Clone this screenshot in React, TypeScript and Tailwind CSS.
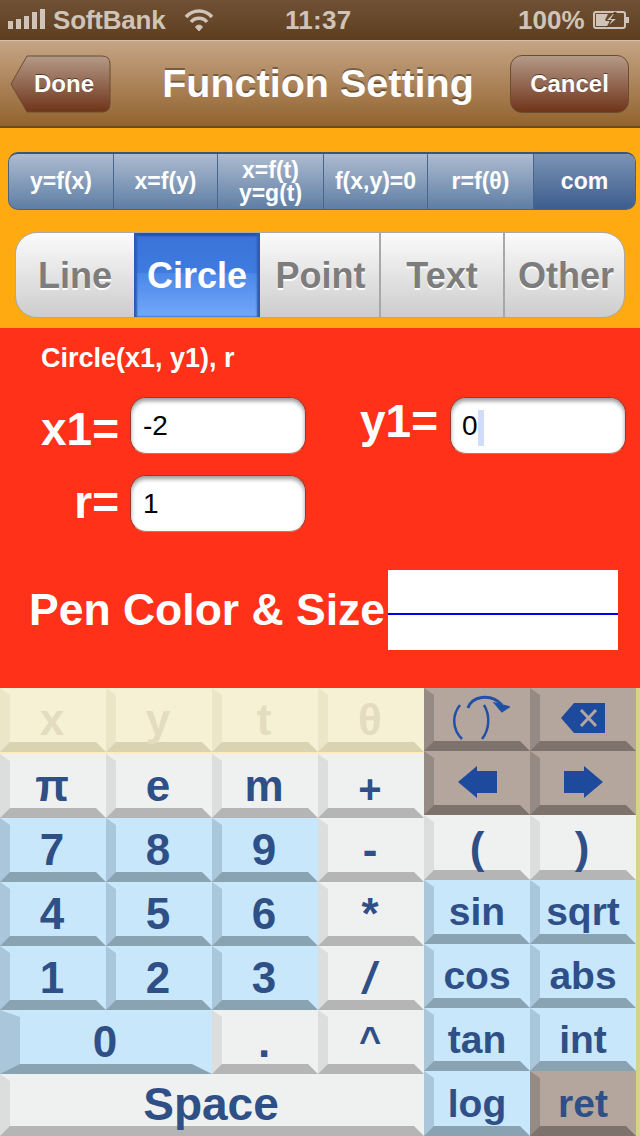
import type { ReactNode } from "react";

const faces = {
  yellow: "bg-[#f6f1d5] border-t-[#f6f1d5] border-r-[#f6f1d5] border-l-[#ece6c8] border-b-[#d9d3b2] text-[#e3dcc0]",
  white: "bg-[#eff1f1] border-t-[#eff1f1] border-r-[#eff1f1] border-l-[#dcdddd] border-b-[#b4b5b4] text-[#2f4f87]",
  blue: "bg-[#c8e7fb] border-t-[#c8e7fb] border-r-[#c8e7fb] border-l-[#a9c6da] border-b-[#8aa3b3] text-[#2f4f87]",
  brown: "bg-[#b5a69d] border-t-[#b5a69d] border-r-[#b5a69d] border-l-[#968a84] border-b-[#7e726c] text-[#2f4f87]",
};

type Face = keyof typeof faces;

function Key({
  face,
  children,
  className = "w-[106px] border-l-[10px] border-r-[10px]",
  big = true,
}: {
  face: Face;
  children?: ReactNode;
  className?: string;
  big?: boolean;
}) {
  return (
    <div
      className={`h-full flex items-center justify-center border-t-[7px] border-b-[10px] font-bold ${
        big ? "text-[44px] pt-[3px] pr-[2px]" : "text-[39px] pt-[4px]"
      } ${faces[face]} ${className}`}
    >
      {children}
    </div>
  );
}

function RotateIcon() {
  return (
    <svg className="mt-[-4px]" width="66" height="48" viewBox="0 0 66 48" fill="none" stroke="#2150a4" strokeWidth="2.500">
      <path d="M16 11C8 21 8 35 18 45" />
      <path d="M40 11C46 21 46 35 38 45" />
      <path d="M24 14C27 3 46 -2 58 11" strokeWidth="3" />
      <path d="M52 10L64 13L58 17Z" fill="#2150a4" />
    </svg>
  );
}

function BackspaceIcon() {
  return (
    <svg className="mt-[-4px]" width="44" height="30" viewBox="0 0 44 30">
      <path d="M0 15L13 0H44V30H13Z" fill="#1e4a9e" />
      <path d="M20 7L35 23M35 7L20 23" stroke="#b5a69d" strokeWidth="3" />
    </svg>
  );
}

function ArrowIcon({ right = false }: { right?: boolean }) {
  return (
    <svg className="mt-[-4px]" width="39" height="32" viewBox="0 0 39 32">
      <path d={right ? "M0 5H20V0L39 16L20 32V27H0Z" : "M39 5H19V0L0 16L19 32V27H39Z"} fill="#1e4a9e" />
    </svg>
  );
}

function StatusBar() {
  return (
    <div className="h-[40px] flex items-center pl-[8px] bg-gradient-to-b from-[#715135] to-[#5d3e1f] text-[#cfc4b7] text-[26px] font-bold">
      <div className="w-[38px] h-[20px] flex items-end gap-[3px] mt-[-2px]">
        <span className="w-[5px] h-[8px] bg-[#cfc4b7]" />
        <span className="w-[5px] h-[10px] bg-[#cfc4b7]" />
        <span className="w-[5px] h-[13px] bg-[#cfc4b7]" />
        <span className="w-[5px] h-[17px] bg-[#cfc4b7]" />
        <span className="w-[5px] h-[20px] bg-[#cfc4b7]" />
      </div>
      <span className="ml-[7px] w-[112px] tracking-[-0.2px]">SoftBank</span>
      <svg className="ml-[19px] w-[30px] h-[24px]" viewBox="0 0 30 24" fill="none" stroke="#cfc4b7" strokeWidth="3.500">
        <path d="M2 9C9 1 21 1 28 9" />
        <path d="M7 14C11 9 19 9 23 14" />
        <path d="M11.500 19L15 23L18.500 19C17 16.500 13 16.500 11.500 19Z" fill="#cfc4b7" strokeWidth="1" />
      </svg>
      <span className="ml-[71px] w-[66px] tracking-[0.3px]">11:37</span>
      <span className="ml-[167px] w-[65px]">100%</span>
      <svg className="ml-[10px] w-[37px] h-[18px]" viewBox="0 0 37 18" fill="none">
        <rect x="1" y="1" width="31" height="16" rx="2" stroke="#cfc4b7" strokeWidth="2" />
        <rect x="33" y="6" width="3" height="6" fill="#cfc4b7" />
        <path d="M3 3H15L12 9H17L15 15H3Z" fill="#cfc4b7" />
        <path d="M21 1L12 10H17L13 17L25 7H19L24 1Z" fill="#5d3e1f" />
        <path d="M20 3L14 9H19L16 14L23 8H17.500L21 3Z" fill="#cfc4b7" />
      </svg>
    </div>
  );
}

function NavBar() {
  return (
    <div className="h-[88px] flex items-center pl-[10px] bg-gradient-to-b from-[#c5a585] to-[#92632d] border-t border-t-[#d8c3a8] border-b-2 border-b-[#6c4a1c]">
      <div className="relative w-[101px] h-[58px] flex items-center justify-center pl-[7px] text-white text-[24px] font-bold [text-shadow:0_-1px_0_rgba(0,0,0,0.5)]">
        <svg className="absolute inset-0" width="101" height="58" viewBox="0 0 101 58">
          <defs>
            <linearGradient id="back" x1="0" y1="0" x2="0" y2="1">
              <stop offset="0" stopColor="#b49a88" />
              <stop offset="1" stopColor="#6f3419" />
            </linearGradient>
          </defs>
          <path d="M1 29L17 1H92Q100 1 100 9V49Q100 57 92 57H17Z" fill="url(#back)" stroke="#6b4c2e" />
        </svg>
        <span className="relative">Done</span>
      </div>
      <div className="flex-1 flex justify-center pl-[15px] text-white text-[39.500px] font-bold [text-shadow:0_-2px_0_rgba(0,0,0,0.35)]">
        Function Setting
      </div>
      <div className="w-[119px] h-[58px] mr-[11px] flex items-center justify-center rounded-[12px] border border-[#6b4c2e] bg-gradient-to-b from-[#b49a88] to-[#6f3419] text-white text-[24px] font-bold [text-shadow:0_-1px_0_rgba(0,0,0,0.5)]">
        Cancel
      </div>
    </div>
  );
}

function TypeTabs() {
  const tabs: [string, string][] = [
    ["y=f(x)", "w-[105px]"],
    ["x=f(y)", "w-[104px]"],
    ["x=f(t)\ny=g(t)", "w-[106px]"],
    ["f(x,y)=0", "w-[104px]"],
    ["r=f(θ)", "w-[106px]"],
  ];
  return (
    <div className="ml-[8px] mr-[4px] h-[58px] flex rounded-[10px] overflow-hidden border border-[#4a6185] border-t-2 border-t-[#3f5575] bg-gradient-to-b from-[#adbcd0] to-[#5f7ea4] text-white font-bold text-[23px]">
      {tabs.map(([label, w]) => (
        <div
          key={label}
          className={`${w} flex items-center justify-center text-center whitespace-pre-line leading-[23px] border-r border-r-[#4a6690]`}
        >
          {label}
        </div>
      ))}
      <div className="flex-1 flex items-center justify-center bg-gradient-to-b from-[#7c93b4] to-[#3c5d8e]">com</div>
    </div>
  );
}

function ShapeTabs() {
  const rest = "flex items-center justify-center pt-[1px] text-[#7d7d7d] [text-shadow:0_2px_0_#ffffff]";
  return (
    <div className="mt-[22px] mx-[15px] h-[86px] flex rounded-[22px] overflow-hidden border border-[#a9a9a9] bg-gradient-to-b from-[#fbfbfb] to-[#cdcdcd] text-[36px] font-bold">
      <div className={`${rest} w-[118px]`}>Line</div>
      <div className="w-[126px] flex items-center justify-center pt-[2px] text-white shadow-[inset_3px_0_2px_#2c5cb2,inset_-3px_0_2px_#2c5cb2,inset_0_3px_2px_#2452a6] bg-[linear-gradient(#3a72d8_0%,#3f7be0_48%,#4c87e8_48%,#72a8fa_100%)]">
        Circle
      </div>
      <div className={`${rest} w-[121px] pl-[2px] border-r-2 border-r-[#a8a8a8]`}>Point</div>
      <div className={`${rest} w-[124px] border-r-2 border-r-[#a8a8a8]`}>Text</div>
      <div className={`${rest} flex-1 pl-[3px]`}>Other</div>
    </div>
  );
}

function Field({ children }: { children: ReactNode }) {
  return (
    <div className="w-[176px] h-[57px] pl-[12px] rounded-[16px] bg-white border border-[#98382a] border-b-[#c9765f] shadow-[inset_0_3px_4px_rgba(0,0,0,0.4)] text-black text-[28px] font-normal leading-[55px]">
      {children}
    </div>
  );
}

function FormPanel() {
  return (
    <div className="h-[360px] bg-[#ff3118] text-white font-bold">
      <div className="h-[69px] pl-[41px] pt-[15px] text-[27px] leading-[30px]">Circle(x1, y1), r</div>
      <div className="flex pl-[41px] text-[46px] leading-[46px]">
        <span className="w-[89px] mt-[9px]">x1=</span>
        <Field>-2</Field>
        <span className="ml-[54px] w-[90px] mt-[1px]">y1=</span>
        <Field>
          <span className="ml-[-1px]">0</span>
          <span className="inline-block w-[6px] h-[36px] align-middle bg-[#cfdcfa]" />
        </Field>
      </div>
      <div className="flex mt-[21px] pl-[41px] text-[46px] leading-[46px]">
        <span className="w-[78px] mr-[11px] mt-[4px] text-right">r=</span>
        <Field>1</Field>
      </div>
      <div className="flex mt-[38px] pl-[29px]">
        <span className="w-[356px] mt-[18px] text-[44.500px] leading-[44px] whitespace-nowrap">Pen Color &amp; Size</span>
        <div className="ml-[3px] w-[230px] h-[80px] pt-[43px] bg-white">
          <div className="h-[2px] bg-[#0000ee]" />
        </div>
      </div>
    </div>
  );
}

function Keyboard() {
  return (
    <div className="flex h-[448px]">
      <div className="w-[424px] flex flex-col">
        <div className="h-[66px] flex border-b-2 border-b-[#fcefb5]">
          <Key face="yellow">x</Key>
          <Key face="yellow">y</Key>
          <Key face="yellow">t</Key>
          <Key face="yellow">θ</Key>
        </div>
        <div className="h-[64px] flex">
          <Key face="white">π</Key>
          <Key face="white">e</Key>
          <Key face="white">m</Key>
          <Key face="white"><span className="text-[40px] mt-[5px]">+</span></Key>
        </div>
        <div className="h-[64px] flex">
          <Key face="blue">7</Key>
          <Key face="blue">8</Key>
          <Key face="blue">9</Key>
          <Key face="white">-</Key>
        </div>
        <div className="h-[64px] flex">
          <Key face="blue">4</Key>
          <Key face="blue">5</Key>
          <Key face="blue">6</Key>
          <Key face="white">*</Key>
        </div>
        <div className="h-[64px] flex">
          <Key face="blue">1</Key>
          <Key face="blue">2</Key>
          <Key face="blue">3</Key>
          <Key face="white"><span className="inline-block -skew-x-12">/</span></Key>
        </div>
        <div className="h-[64px] flex">
          <Key face="blue" className="w-[212px] border-l-[20px] border-r-[20px]">0</Key>
          <Key face="white">.</Key>
          <Key face="white"><span className="text-[38px] mt-[-1px]">^</span></Key>
        </div>
        <div className="h-[62px] flex">
          <Key face="white" className="w-[424px] border-l-[10px] border-r-[10px]">
            <span className="text-[46px] mt-[-2px]">Space</span>
          </Key>
        </div>
      </div>
      <div className="w-[212px] flex flex-col">
        <div className="h-[63px] flex">
          <Key face="brown" big={false}><RotateIcon /></Key>
          <Key face="brown" big={false}><BackspaceIcon /></Key>
        </div>
        <div className="h-[64px] flex">
          <Key face="brown" big={false}><ArrowIcon /></Key>
          <Key face="brown" big={false}><ArrowIcon right /></Key>
        </div>
        <div className="h-[65px] flex">
          <Key face="white"><span className="ml-[2px]">(</span></Key>
          <Key face="white">)</Key>
        </div>
        <div className="h-[64px] flex">
          <Key face="blue" big={false}>sin</Key>
          <Key face="blue" big={false}>sqrt</Key>
        </div>
        <div className="h-[64px] flex">
          <Key face="blue" big={false}>cos</Key>
          <Key face="blue" big={false}>abs</Key>
        </div>
        <div className="h-[63px] flex">
          <Key face="blue" big={false}>tan</Key>
          <Key face="blue" big={false}>int</Key>
        </div>
        <div className="h-[65px] flex">
          <Key face="blue" big={false}>log</Key>
          <Key face="brown" big={false}>ret</Key>
        </div>
      </div>
      <div className="w-[4px] bg-[#d6d48c]" />
    </div>
  );
}

export default function App() {
  return (
    <div className="w-[640px] h-[1136px] overflow-hidden font-['Liberation_Sans',sans-serif]">
      <StatusBar />
      <NavBar />
      <div className="h-[200px] pt-[24px] bg-[#ffaa10]">
        <TypeTabs />
        <ShapeTabs />
      </div>
      <FormPanel />
      <Keyboard />
    </div>
  );
}
